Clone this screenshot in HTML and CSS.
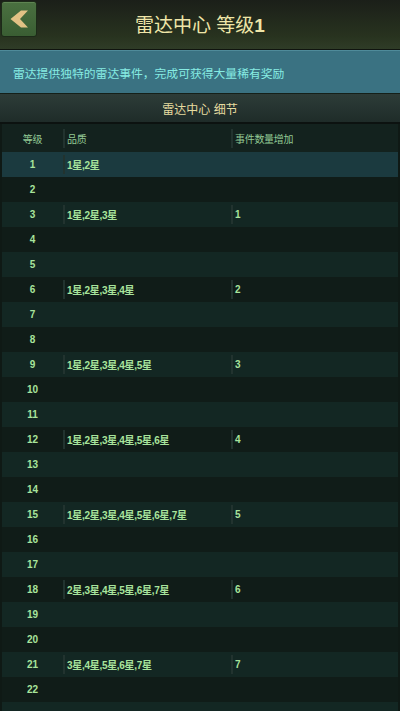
FILE: index.html
```html
<!DOCTYPE html>
<html lang="zh">

<head>
    <meta charset="UTF-8">
    <meta name="viewport" content="width=device-width, initial-scale=1.0">
    <link rel="stylesheet" href="styles.css">
    <title>雷达中心</title>
</head>

<body>
    <div class="page">
        <!-- Top bar -->
        <header class="top-bar">
            <button class="back-btn" type="button">
                <svg width="24" height="24" viewBox="0 0 24 24">
                    <path d="M14 3.5 L21 3.5 L13 12 L21 20.5 L14 20.5 L3.5 12 Z" fill="#e2c285" />
                </svg>
            </button>
            <h1 class="title">雷达中心 等级<b>1</b></h1>
        </header>

        <!-- Description -->
        <div class="desc">雷达提供独特的雷达事件，完成可获得大量稀有奖励</div>

        <div class="section-head">雷达中心 细节</div>

        <!-- Level table -->
        <div class="table">
            <div class="row head">
                <div class="cell lvl">等级</div>
                <div class="cell"><span class="val">品质</span></div>
                <div class="cell"><span class="val">事件数量增加</span></div>
            </div>
            <div id="rows"></div>
        </div>
    </div>

    <script>
        const rows = document.getElementById('rows')
        const data = {
            1: ['1星,2星', ''],
            3: ['1星,2星,3星', '1'],
            6: ['1星,2星,3星,4星', '2'],
            9: ['1星,2星,3星,4星,5星', '3'],
            12: ['1星,2星,3星,4星,5星,6星', '4'],
            15: ['1星,2星,3星,4星,5星,6星,7星', '5'],
            18: ['2星,3星,4星,5星,6星,7星', '6'],
            21: ['3星,4星,5星,6星,7星', '7']
        }

        for (let i = 1; i <= 22; i++) {
            const item = data[i] || ['', '']
            const row = document.createElement('div')
            row.className = 'row ' + (i === 1 ? 'current' : (i % 2 ? 'odd' : 'even'))
            row.innerHTML =
                '<div class="cell lvl">' + i + '</div>' +
                '<div class="cell">' + (item[0] ? '<span class="val">' + item[0] + '</span>' : '') + '</div>' +
                '<div class="cell">' + (item[1] ? '<span class="val">' + item[1] + '</span>' : '') + '</div>'
            rows.appendChild(row)
        }

        // next row only peeks in at the bottom edge
        const filler = document.createElement('div')
        filler.className = 'row odd'
        rows.appendChild(filler)
    </script>
</body>

</html>
```

FILE: styles.css
```css
* {
  box-sizing: border-box;
}

body {
  margin: 0;
  background-color: #0f1915;
  font-family: "Liberation Sans", "Noto Sans CJK SC", sans-serif;
  overflow: hidden;
}

.page {
  width: 400px;
  height: 711px;
  overflow: hidden;
}

.top-bar {
  position: relative;
  height: 50px;
  background: linear-gradient(#1b1f19, #28331f 75%, #2f3c27);
  border-bottom: 1px solid #10140f;
  display: flex;
  align-items: center;
  justify-content: center;
}

.back-btn {
  position: absolute;
  left: 1px;
  top: 1px;
  width: 36px;
  height: 36px;
  padding: 0;
  border: 1px solid #1c2a18;
  border-radius: 3px;
  background: linear-gradient(#4a7040, #3a5e33);
  box-shadow: inset 0 1px 0 #5e8452;
  display: flex;
  align-items: center;
  justify-content: center;
}

.title {
  margin: 0 0 2px;
  font-size: 19px;
  font-weight: normal;
  color: #efe6a8;
}

.title b {
  font-weight: bold;
}

.desc {
  height: 43px;
  padding-left: 13px;
  display: flex;
  align-items: center;
  background-color: #3a7282;
  border-top: 1px solid #4f8b9a;
  color: #86ece2;
  font-size: 11.8px;
}

.section-head {
  height: 31px;
  display: flex;
  align-items: center;
  justify-content: center;
  background: linear-gradient(#2d3c38, #1f2c29);
  border-top: 1px solid #152019;
  border-bottom: 2px solid #0c1210;
  color: #e6dca0;
  font-size: 12px;
}

.table {
  padding: 0 2px;
}

.row {
  display: grid;
  grid-template-columns: 61px 168px 1fr;
  height: 25px;
  align-items: center;
}

.row.head {
  height: 28px;
  background-color: #13221e;
}

.row.head .cell {
  color: #92c994;
  font-weight: normal;
  font-size: 10px;
  letter-spacing: -0.3px;
}

.row.odd {
  background-color: #132723;
}

.row.even {
  background-color: #101c18;
}

.row.current {
  background-color: #1b3a3f;
}

.cell {
  height: 100%;
  display: flex;
  align-items: center;
  color: #a8e49c;
  font-size: 10px;
  font-weight: bold;
  letter-spacing: -0.3px;
}

.cell.lvl {
  justify-content: center;
  letter-spacing: 0;
}

.val {
  height: 19px;
  display: flex;
  align-items: center;
  padding-left: 2px;
  border-left: 2px solid #22332f;
}
```
